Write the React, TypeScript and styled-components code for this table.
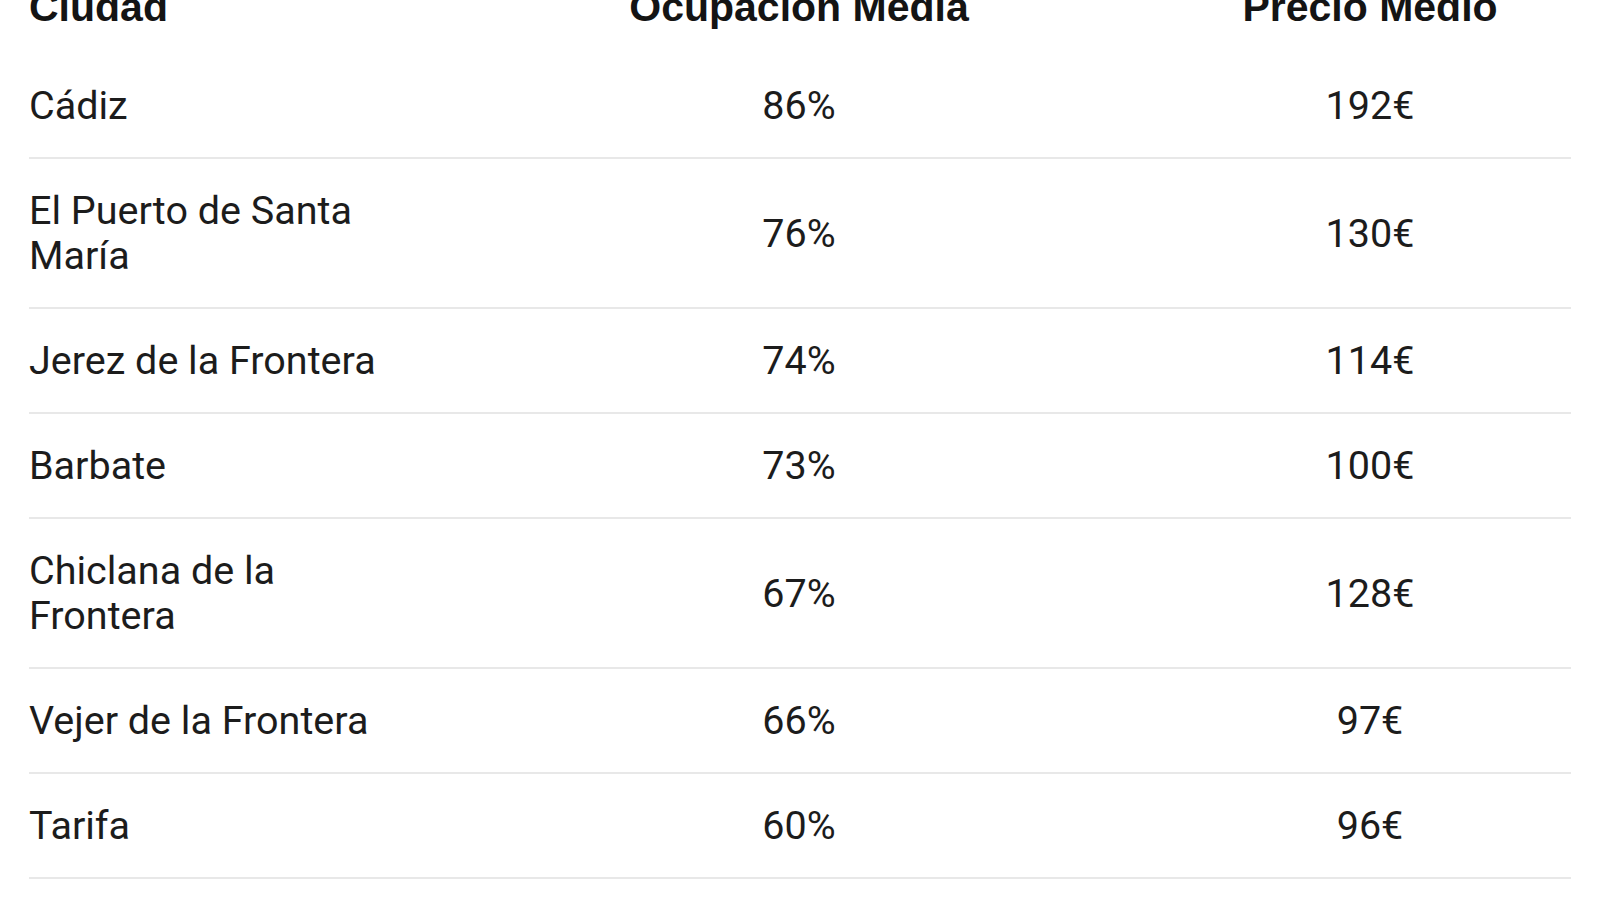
import styled, { createGlobalStyle } from 'styled-components';

const GlobalStyle = createGlobalStyle`
    html, body {
        margin: 0;
        padding: 0;
        background: #ffffff;
        overflow: hidden;
    }
    body {
        font-family: Roboto, "Liberation Sans", sans-serif;
        color: #1c1c1c;
    }
`

const Page = styled.div`
    width: 1600px;
    height: 900px;
    overflow: hidden;
    background: #ffffff;
`

const Table = styled.div`
    margin: -45px 29px 0 29px;
    display: flex;
    flex-direction: column;
`

const Row = styled.div<{ $header?: boolean }>`
    display: grid;
    grid-template-columns: 400px 740px 1fr;
    align-items: center;
    padding: ${p => p.$header ? '30px 0 24px' : '29px 0'};
    border-bottom: ${p => p.$header ? 'none' : '2px solid #e8e8e8'};
`

const Cell = styled.div<{ $center?: boolean }>`
    font-size: 39.5px;
    line-height: 45px;
    text-align: ${p => p.$center ? 'center' : 'left'};
    padding-right: ${p => p.$center ? '0' : '20px'};
    color: #1c1c1c;
`

const HeadCell = styled(Cell)`
    font-family: "Liberation Sans", Arial, sans-serif;
    font-size: 41px;
    font-weight: 700;
    color: #141414;
`

type City = {
    name: string,
    occupancy: string,
    price: string
}

const cities: City[] = [
    { name: 'Cádiz', occupancy: '86%', price: '192€' },
    { name: 'El Puerto de Santa María', occupancy: '76%', price: '130€' },
    { name: 'Jerez de la Frontera', occupancy: '74%', price: '114€' },
    { name: 'Barbate', occupancy: '73%', price: '100€' },
    { name: 'Chiclana de la Frontera', occupancy: '67%', price: '128€' },
    { name: 'Vejer de la Frontera', occupancy: '66%', price: '97€' },
    { name: 'Tarifa', occupancy: '60%', price: '96€' },
];

const App = () => {
    return (
        <Page>
            <GlobalStyle />
            <Table>
                <Row $header>
                    <HeadCell>Ciudad</HeadCell>
                    <HeadCell $center>Ocupación Media</HeadCell>
                    <HeadCell $center>Precio Medio</HeadCell>
                </Row>
                {cities.map(city => (
                    <Row key={city.name}>
                        <Cell>{city.name}</Cell>
                        <Cell $center>{city.occupancy}</Cell>
                        <Cell $center>{city.price}</Cell>
                    </Row>
                ))}
            </Table>
        </Page>
    );
}

export default App;
